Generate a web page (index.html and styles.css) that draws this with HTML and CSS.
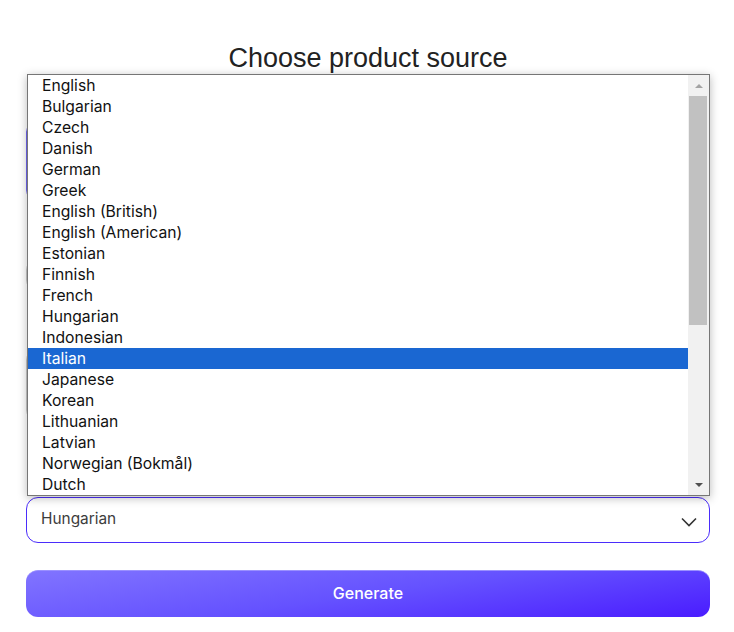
FILE: index.html
```html
<!DOCTYPE html>
<html lang="en">
<head>
<meta charset="utf-8">
<title>Choose product source</title>
<link rel="stylesheet" href="styles.css">
</head>
<body>
<main class="page">
  <h1 class="title">Choose product source</h1>
  <section class="behind">
    <div class="card card-active"></div>
    <div class="card card-plain"></div>
    <div class="card card-plain tall"></div>
  </section>
  <div class="select-wrap">
    <div class="listbox">
      <ul class="options">
        <li>English</li>
        <li>Bulgarian</li>
        <li>Czech</li>
        <li>Danish</li>
        <li>German</li>
        <li>Greek</li>
        <li>English (British)</li>
        <li>English (American)</li>
        <li>Estonian</li>
        <li>Finnish</li>
        <li>French</li>
        <li>Hungarian</li>
        <li>Indonesian</li>
        <li class="selected">Italian</li>
        <li>Japanese</li>
        <li>Korean</li>
        <li>Lithuanian</li>
        <li>Latvian</li>
        <li>Norwegian (Bokmål)</li>
        <li>Dutch</li>
      </ul>
      <div class="scrollbar">
        <div class="arrow arrow-up"></div>
        <div class="track"><div class="thumb"></div></div>
        <div class="arrow arrow-down"></div>
      </div>
    </div>
    <div class="select">
      <span class="select-value">Hungarian</span>
      <svg class="chevron" width="16" height="10" viewBox="0 0 16 10"><path d="M1 1.5 L8 8.5 L15 1.5" fill="none" stroke="#333" stroke-width="1.6"/></svg>
    </div>
  </div>
  <button class="generate">Generate</button>
</main>
</body>
</html>
```

FILE: styles.css
```css
* { box-sizing: border-box; }
html, body { margin: 0; padding: 0; background: #fff; }
body { font-family: Inter, "Noto Sans", sans-serif; }

.page {
  width: 684px;
  margin-left: 26px;
  padding-top: 42px;
}

.title {
  margin: 0;
  font-family: "Liberation Sans", Arial, sans-serif;
  font-weight: 400;
  font-size: 27px;
  line-height: 32px;
  color: #222;
  text-align: center;
}

.behind {
  height: 423px;
  display: flex;
  flex-direction: column;
  gap: 60px;
  padding-top: 48px;
}
.card {
  border-radius: 10px;
  height: 78px;
}
.card-active { border: 2px solid #6f66f0; }
.card-plain { border: 1px solid #c9c9c9; height: 30px; }
.card-plain.tall { height: 70px; }

.select-wrap { position: relative; }

.listbox {
  position: absolute;
  left: 1px;
  right: 0;
  bottom: 100%;
  margin-bottom: 1px;
  height: 422px;
  display: flex;
  background: #fff;
  border: 1px solid #767676;
  box-shadow: 0 2px 9px rgba(0,0,0,0.28);
  z-index: 5;
}

.options {
  list-style: none;
  margin: 0;
  padding: 0;
  flex: 1;
}
.options li {
  height: 21px;
  line-height: 21px;
  padding-left: 14px;
  font-size: 15.7px;
  color: #111;
  white-space: nowrap;
}
.options li.selected {
  background: #1a67d2;
  color: #fff;
}

.scrollbar {
  width: 21px;
  background: #f1f1f1;
  display: flex;
  flex-direction: column;
}
.arrow {
  height: 21px;
  display: flex;
  align-items: center;
  justify-content: center;
}
.arrow::before {
  content: "";
  width: 0;
  height: 0;
  border-left: 4px solid transparent;
  border-right: 4px solid transparent;
}
.arrow-up::before { border-bottom: 4px solid #a3a3a3; }
.arrow-down::before { border-top: 4px solid #505050; }
.track { flex: 1; padding: 0 2px 0 1px; }
.thumb {
  height: 229px;
  background: #c1c1c1;
}

.select {
  height: 46px;
  border: 1px solid #4b2dfb;
  border-radius: 12px;
  display: flex;
  align-items: center;
  justify-content: space-between;
  padding: 0 12px 3px 14px;
}
.select-value {
  font-size: 15.4px;
  color: #3c3c3c;
}
.chevron { display: block; margin-top: 6px; }

.generate {
  display: block;
  width: 100%;
  height: 47px;
  margin-top: 27px;
  padding: 0 0 3px;
  border: 0;
  border-top: 1px solid #9a90ff;
  border-radius: 12px;
  background: linear-gradient(172deg, #8174ff 0%, #6552ff 50%, #4a1cff 100%);
  color: #fff;
  font-family: Inter, "Noto Sans", sans-serif;
  font-size: 16px;
  font-weight: 500;
  cursor: pointer;
}
```
